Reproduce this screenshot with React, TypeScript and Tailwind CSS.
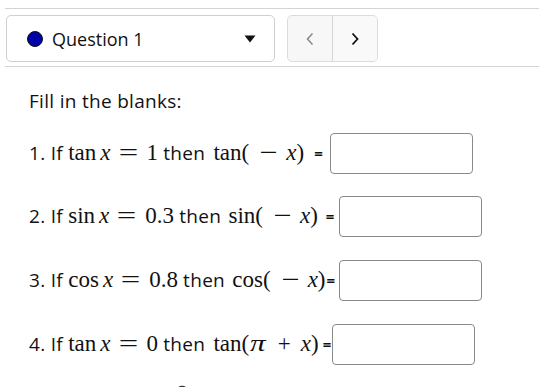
import React from "react";

const Fn = ({ children, className = "" }: { children: React.ReactNode; className?: string }) => (
  <span className={"font-['Liberation_Serif',serif] text-[23px] " + className}>{children}</span>
);
const X = ({ children = "x", className = "" }: { children?: React.ReactNode; className?: string }) => (
  <span className={"font-['Liberation_Serif',serif] italic text-[23px] " + className}>{children}</span>
);
const Eq = () => (
  <span className="ml-[9px] mr-[10px] inline-flex w-[17px] justify-center font-['Liberation_Serif',serif] text-[23px]">
    <span className="inline-block scale-x-[1.5]">=</span>
  </span>
);
const Minus = () => (
  <span className="ml-[12px] mr-[10px] inline-flex w-[15px] justify-center font-['Liberation_Serif',serif] text-[23px]">
    <span className="inline-block scale-x-[1.4]">−</span>
  </span>
);
const Sans = ({ children }: { children: React.ReactNode }) => (
  <span className="whitespace-pre tracking-[0.3px]">{children}</span>
);
const BoldEq = ({ ml }: { ml: string }) => (
  <span className={"font-bold text-[15px] " + ml}>=</span>
);

const Blank = ({ ml }: { ml: string }) => (
  <div className={"h-[41px] w-[143px] shrink-0 rounded-[4px] border border-[#8a8a8a] bg-white " + ml} />
);

export default function App() {
  return (
    <div className="w-[539px] h-[387px] overflow-hidden bg-white text-[#111] font-['Open_Sans','Noto_Sans',sans-serif]">
      <div className="pt-[8px] pl-[5px]">
        <div className="border-t border-[#d4d4d4]" />
        <div className="flex items-stretch gap-[12px] pl-px pt-[6px] pb-[4px]">
          <div className="flex h-[47px] w-[269px] items-center rounded-[5px] border border-[#cfcfcf] bg-white pl-[20px] pr-[10px]">
            <span className="h-[16px] w-[16px] rounded-full border border-[#111] bg-[#0000a8]" />
            <span className="ml-[9px] text-[18px] leading-none">Question 1</span>
            <svg className="ml-auto mr-[8px]" width="12" height="8" viewBox="0 0 12 8">
              <path d="M0.5 0.5 L11.5 0.5 L6 7.5 Z" fill="#111" />
            </svg>
          </div>
          <div className="flex h-[47px] w-[91px] overflow-hidden rounded-[5px] border border-[#dcdcdc] bg-[#f7f7f7]">
            <div className="flex w-[45px] items-center justify-center border-r border-[#d6d6d6]">
              <svg width="10" height="14" viewBox="0 0 10 14">
                <polyline points="7.5,1.5 2.5,7 7.5,12.5" fill="none" stroke="#8c8c8c" strokeWidth="1.6" />
              </svg>
            </div>
            <div className="flex flex-1 items-center justify-center bg-[#f9f9f9]">
              <svg width="10" height="14" viewBox="0 0 10 14">
                <polyline points="2.5,1.5 7.5,7 2.5,12.5" fill="none" stroke="#111" strokeWidth="1.8" />
              </svg>
            </div>
          </div>
        </div>
        <div className="border-t border-[#d4d4d4]" />
      </div>

      <div className="pl-[29px] pt-[22px] text-[19px]">
        <div className="leading-[24px] tracking-[0.3px]">Fill in the blanks:</div>

        <div className="mt-[20px] flex flex-col gap-[23px]">
          <div className="flex h-[40px] items-center">
            <Sans>1. If </Sans>
            <Fn>tan</Fn>
            <span className="w-[4px]" />
            <X />
            <Eq />
            <Fn>1</Fn>
            <Sans> then </Sans>
            <Fn className="ml-[3px]">tan(</Fn>
            <Minus />
            <X />
            <Fn>)</Fn>
            <BoldEq ml="ml-[10px]" />
            <Blank ml="ml-[7px]" />
          </div>

          <div className="flex h-[41px] items-center">
            <Sans>2. If </Sans>
            <Fn>sin</Fn>
            <span className="w-[4px]" />
            <X />
            <Eq />
            <Fn>0.3</Fn>
            <Sans> then </Sans>
            <Fn className="ml-[2px]">sin(</Fn>
            <Minus />
            <X />
            <Fn>)</Fn>
            <BoldEq ml="ml-[8px]" />
            <Blank ml="ml-[5px]" />
          </div>

          <div className="flex h-[41px] items-center">
            <Sans>3. If </Sans>
            <Fn>cos</Fn>
            <span className="w-[4px]" />
            <X />
            <Eq />
            <Fn>0.8</Fn>
            <Sans> then </Sans>
            <Fn className="ml-[2px]">cos(</Fn>
            <Minus />
            <X />
            <Fn>)</Fn>
            <BoldEq ml="ml-[1px]" />
            <Blank ml="ml-[4px]" />
          </div>

          <div className="flex h-[40px] items-center">
            <Sans>4. If </Sans>
            <Fn>tan</Fn>
            <span className="w-[4px]" />
            <X />
            <Eq />
            <Fn>0</Fn>
            <Sans> then </Sans>
            <Fn className="ml-[3px]">tan(</Fn>
            <X className="inline-block scale-x-[1.35] ml-[3px] mr-[4px]">π</X>
            <Fn className="mx-[10px]">+</Fn>
            <X />
            <Fn>)</Fn>
            <BoldEq ml="ml-[4px]" />
            <Blank ml="ml-[1px]" />
          </div>
        </div>

        <div className="ml-[148px] mt-[20px]">
          <svg width="10" height="6" viewBox="0 0 10 6">
            <path d="M1 6 C1 1.5 9 1.5 9 6" fill="none" stroke="#333" strokeWidth="1.6" />
          </svg>
        </div>
      </div>
    </div>
  );
}
